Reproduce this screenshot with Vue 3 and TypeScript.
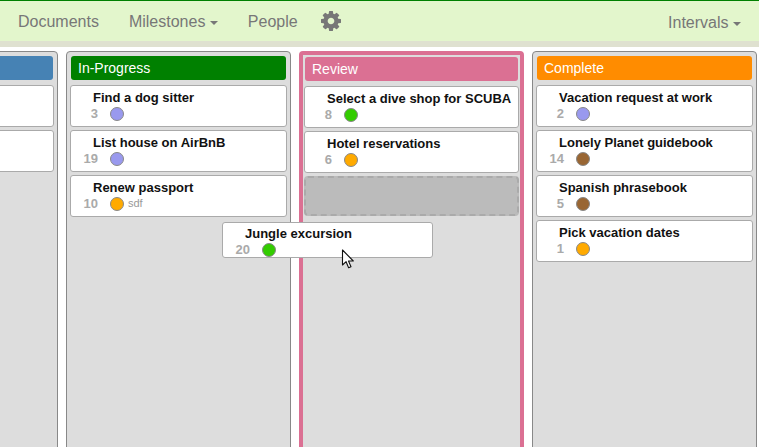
<template>
  <div class="page">
    <nav class="navbar">
      <ul class="nav-list">
        <li class="nav-item">Documents</li>
        <li class="nav-item">Milestones <span class="caret"></span></li>
        <li class="nav-item">People</li>
        <li class="nav-gear">
          <svg width="20" height="20" viewBox="128 128 1536 1536">
            <path
              fill="#777"
              d="M1152 896q0-106-75-181t-181-75-181 75-75 181 75 181 181 75 181-75 75-181zm512-109v222q0 12-8 23t-20 13l-185 28q-19 54-39 91 35 50 107 138 10 12 10 25t-9 23q-27 37-99 108t-94 71q-12 0-26-9l-138-108q-44 23-91 38-16 136-29 186-7 28-36 28h-222q-14 0-24.500-8.500t-11.500-21.500l-28-184q-49-16-90-37l-141 107q-10 9-25 9-14 0-25-11-126-114-165-168-7-10-7-23 0-12 8-23 15-21 51-66.500t54-70.500q-27-50-41-99l-183-27q-13-2-21-12.500t-8-23.500v-222q0-12 8-23t19-13l186-28q14-46 39-92-40-57-107-138-10-12-10-24 0-10 9-23 26-36 98.500-107.500t94.500-71.500q13 0 26 10l138 107q44-23 91-38 16-136 29-186 7-28 36-28h222q14 0 24.500 8.500t11.500 21.500l28 184q49 16 90 37l142-107q9-9 24-9 13 0 25 10 129 119 165 170 7 8 7 22 0 12-8 23-15 21-51 66.500t-54 70.500q26 50 41 98l183 28q13 2 21 12.500t8 23.500z"
            />
          </svg>
        </li>
      </ul>
      <div class="nav-item nav-right">Intervals <span class="caret"></span></div>
    </nav>
    <div class="nav-shadow"></div>

    <main class="board">
      <section
        v-for="col in columns"
        :key="col.id"
        class="column"
        :class="{ 'column-active': col.active }"
      >
        <header class="column-head" :style="{ background: col.color }">{{ col.title }}</header>
        <article v-for="card in col.cards" :key="card.id" class="card">
          <template v-if="card.title">
            <div class="card-title">{{ card.title }}</div>
            <div class="card-meta">
              <span class="card-num">{{ card.num }}</span>
              <span class="dot" :style="{ background: card.dot }"></span>
              <span v-if="card.note" class="card-note">{{ card.note }}</span>
            </div>
          </template>
        </article>
        <div v-if="col.active" class="drop-slot"></div>
      </section>
    </main>

    <article class="card card-drag">
      <div class="card-title">Jungle excursion</div>
      <div class="card-meta">
        <span class="card-num">20</span>
        <span class="dot dot-green"></span>
      </div>
    </article>

    <svg class="cursor" width="15" height="21" viewBox="0 0 15 21">
      <path
        d="M1.500 1v15l3.600-3.300 2.500 6 2.400-1-2.500-5.700h4.800z"
        fill="#fff"
        stroke="#111"
        stroke-width="1.100"
        stroke-linejoin="round"
      />
    </svg>
  </div>
</template>

<script setup lang="ts">
interface Card {
  id: number
  title?: string
  num?: number
  dot?: string
  note?: string
}

interface Column {
  id: string
  title: string
  color: string
  active?: boolean
  cards: Card[]
}

const BLUE = '#99e'
const ORANGE = '#fa0'
const GREEN = '#3c0'
const BROWN = '#963'

// first column is scrolled off the left edge, only the card boxes show
const columns: Column[] = [
  {
    id: 'backlog',
    title: '',
    color: '#4682b4',
    cards: [{ id: 1 }, { id: 2 }],
  },
  {
    id: 'progress',
    title: 'In-Progress',
    color: 'green',
    cards: [
      { id: 3, title: 'Find a dog sitter', num: 3, dot: BLUE },
      { id: 4, title: 'List house on AirBnB', num: 19, dot: BLUE },
      { id: 5, title: 'Renew passport', num: 10, dot: ORANGE, note: 'sdf' },
    ],
  },
  {
    id: 'review',
    title: 'Review',
    color: 'palevioletred',
    active: true,
    cards: [
      { id: 6, title: 'Select a dive shop for SCUBA', num: 8, dot: GREEN },
      { id: 7, title: 'Hotel reservations', num: 6, dot: ORANGE },
    ],
  },
  {
    id: 'complete',
    title: 'Complete',
    color: 'darkorange',
    cards: [
      { id: 8, title: 'Vacation request at work', num: 2, dot: BLUE },
      { id: 9, title: 'Lonely Planet guidebook', num: 14, dot: BROWN },
      { id: 10, title: 'Spanish phrasebook', num: 5, dot: BROWN },
      { id: 11, title: 'Pick vacation dates', num: 1, dot: ORANGE },
    ],
  },
]
</script>

<style>
html,
body {
  margin: 0;
  overflow: hidden;
  background: #fff;
}
</style>

<style scoped>
.page {
  position: relative;
  width: 759px;
  height: 447px;
  overflow: hidden;
  font-family: "Liberation Sans", Arial, sans-serif;
  background: #fff;
}
.navbar {
  display: flex;
  justify-content: space-between;
  align-items: center;
  height: 40px;
  padding: 0 18px;
  background: #e3f6cc;
  border-top: 1px solid green;
}
.nav-list {
  display: flex;
  align-items: center;
  gap: 30px;
  margin: 2px 0 0;
  padding: 0;
  list-style: none;
}
.nav-item {
  font-size: 16px;
  color: #777;
}
.nav-right {
  margin-top: 4px;
}
.caret {
  display: inline-block;
  width: 0;
  height: 0;
  vertical-align: middle;
  border-top: 4px solid #777;
  border-left: 4px solid transparent;
  border-right: 4px solid transparent;
}
.nav-gear {
  display: flex;
  margin-left: -7px;
  margin-top: -2px;
}
.nav-shadow {
  height: 6px;
  background: #dfe1d0;
}
.board {
  display: flex;
  gap: 8px;
  height: 396px;
  margin-top: 4px;
  margin-left: -167px;
}
.column {
  flex: none;
  box-sizing: border-box;
  width: 225px;
  height: 400px;
  padding: 4px 3px;
  background: #ddd;
  border: 1px solid #888;
  border-radius: 4px;
}
.column-active {
  padding: 2px 1px 0;
  border: 4px solid palevioletred;
}
.column-head {
  box-sizing: border-box;
  height: 24px;
  margin: 0 1px 5px;
  padding-left: 7px;
  font-size: 14px;
  line-height: 24px;
  color: #fff;
  border-radius: 3px;
}
.card {
  box-sizing: border-box;
  height: 42px;
  margin-bottom: 3px;
  background: #fff;
  border: 1px solid #aaa;
  border-radius: 3px;
}
.card-title {
  box-sizing: border-box;
  height: 19px;
  padding: 4px 0 0 22px;
  font-size: 13px;
  font-weight: bold;
  line-height: 15px;
  color: #111;
  white-space: nowrap;
}
.card-meta {
  display: flex;
  align-items: flex-start;
  margin-top: 2px;
}
.card-num {
  width: 27px;
  font-size: 13px;
  font-weight: bold;
  line-height: 14px;
  text-align: right;
  color: #aaa;
}
.dot {
  box-sizing: border-box;
  width: 14px;
  height: 14px;
  margin-left: 12px;
  border: 1px solid #888;
  border-radius: 50%;
}
.dot-green {
  background: #3c0;
}
.card-note {
  margin: -1px 0 0 4px;
  font-size: 11px;
  line-height: 14px;
  color: #999;
}
.drop-slot {
  box-sizing: border-box;
  height: 40px;
  background: #bbb;
  border: 2px dashed #aaa;
  border-radius: 4px;
}
.card-drag {
  position: absolute;
  left: 222px;
  top: 222px;
  width: 211px;
  height: 36px;
  margin: 0;
}
.card-drag .card-title {
  height: 18px;
  padding-top: 3px;
}
.cursor {
  position: absolute;
  left: 341px;
  top: 249px;
}
</style>
